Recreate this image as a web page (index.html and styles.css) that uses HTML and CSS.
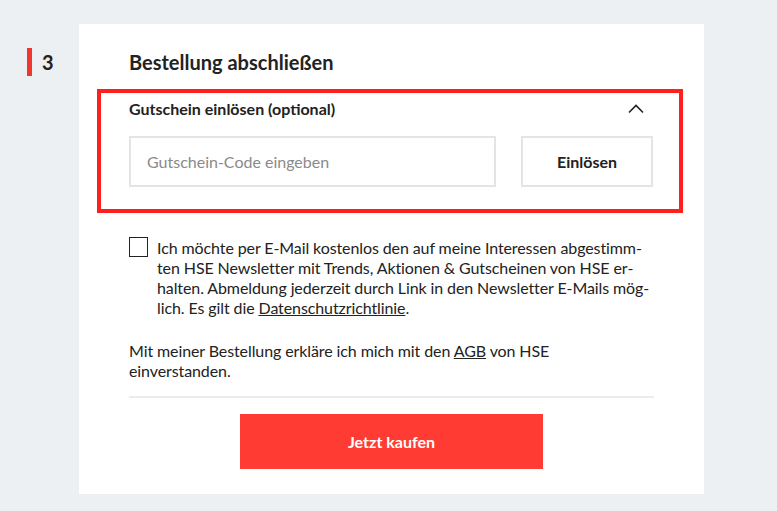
FILE: index.html
```html
<!DOCTYPE html>
<html lang="de">
<head>
    <meta charset="UTF-8">
    <meta name="viewport" content="width=device-width, initial-scale=1.0">
    <title>Bestellung abschließen</title>
    <link rel="stylesheet" href="styles.css">
</head>
<body>
    <div class="page">
        <div class="step">
            <span class="step-bar"></span>
            <span class="step-num">3</span>
        </div>

        <div class="card">
            <h2>Bestellung abschließen</h2>

            <div class="coupon">
                <div class="coupon-head">
                    <span>Gutschein einlösen (optional)</span>
                    <svg class="chevron" width="16" height="10" viewBox="0 0 16 10">
                        <path d="M1 8.5 L8 1.5 L15 8.5" fill="none" stroke="#222" stroke-width="1.6"/>
                    </svg>
                </div>
                <form class="coupon-row">
                    <input type="text" placeholder="Gutschein-Code eingeben">
                    <button type="button">Einlösen</button>
                </form>
            </div>

            <label class="newsletter">
                <span class="checkbox"></span>
                <span>Ich möchte per E-Mail kostenlos den auf meine Interessen abgestimm&shy;ten HSE Newsletter mit Trends, Aktionen &amp; Gutscheinen von HSE er&shy;halten. Abmeldung jederzeit durch Link in den Newsletter E-Mails mög&shy;lich. Es gilt die <a href="#">Datenschutzrichtlinie</a>.</span>
            </label>

            <p class="terms">Mit meiner Bestellung erkläre ich mich mit den <a href="#">AGB</a> von HSE einverstanden.</p>

            <hr>

            <button type="button" class="buy">Jetzt kaufen</button>
        </div>
    </div>
</body>
</html>
```

FILE: styles.css
```css
body {
    margin: 0;
    padding: 0;
    background-color: #edf0f3;
    font-family: Lato, "Open Sans", sans-serif;
    color: #222;
}

.page {
    display: flex;
    padding: 24px 0 0 27px;
}

/* Schritt-Nummer */
.step {
    display: flex;
    align-items: center;
    gap: 10px;
    width: 52px;
    height: 28px;
    margin-top: 24px;
}

.step-bar {
    width: 5px;
    height: 28px;
    background-color: #f0362f;
}

.step-num {
    font-size: 20px;
    font-weight: bold;
}

.card {
    width: 525px;
    padding: 26px 50px 25px;
    background-color: #fff;
}

h2 {
    margin: 0;
    font-size: 20px;
    line-height: 24px;
    font-weight: bold;
}

/* Gutschein */
.coupon {
    margin: 15px -29px 0 -32px;
    padding: 6px 26px 22px 28px;
    border: 4px solid #ff1f1f;
}

.coupon-head {
    display: flex;
    justify-content: space-between;
    align-items: center;
    font-size: 16px;
    line-height: 20px;
    font-weight: bold;
}

.chevron {
    margin-right: 9px;
}

.coupon-row {
    display: grid;
    grid-template-columns: 1fr 132px;
    gap: 25px;
    margin-top: 17px;
}

.coupon-row input,
.coupon-row button {
    box-sizing: border-box;
    height: 51px;
    margin: 0;
    border: 2px solid #e4e4e4;
    border-radius: 0;
    background-color: #fff;
    font-family: inherit;
    font-size: 16px;
    color: #222;
}

.coupon-row input {
    padding: 0 16px;
}

.coupon-row input::placeholder {
    color: #8a8a8a;
}

.coupon-row button {
    font-weight: bold;
    cursor: pointer;
}

/* Newsletter */
.newsletter {
    display: flex;
    gap: 9px;
    margin-top: 25px;
    font-size: 16px;
    line-height: 20px;
    letter-spacing: -0.1px;
}

.newsletter .checkbox {
    flex: none;
    box-sizing: border-box;
    width: 19px;
    height: 20px;
    margin-top: -1px;
    border: 1px solid #222;
}

a {
    color: #222;
}

.terms {
    margin: 23px 0 0;
    font-size: 16px;
    line-height: 20px;
    letter-spacing: -0.1px;
}

hr {
    margin: 15px 0 0;
    border: 0;
    height: 2px;
    background-color: #ececec;
}

.buy {
    display: block;
    width: 303px;
    height: 55px;
    margin: 16px auto 0;
    border: 0;
    background-color: #ff3b33;
    color: #fff;
    font-family: inherit;
    font-size: 16px;
    font-weight: bold;
    cursor: pointer;
}
```
